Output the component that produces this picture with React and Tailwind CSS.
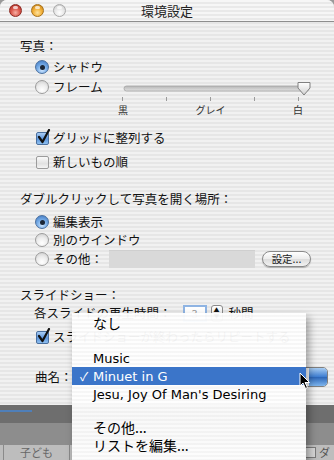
import React from 'react';

const stripes =
  'bg-[repeating-linear-gradient(180deg,#f1f1f1_0px,#f1f1f1_2px,#e6e6e6_2px,#e6e6e6_4px)]';
const jp = { fontFamily: '"Noto Sans CJK JP", "DejaVu Sans", sans-serif' };
const menuFont = { fontFamily: '"DejaVu Sans", "Noto Sans CJK JP", sans-serif' };

function Light({ color }) {
  const fills = {
    red: 'bg-[radial-gradient(circle_at_50%_70%,#f6b0a4_0%,#dc5a4e_45%,#a8281f_100%)] border-[#8c2a22]',
    yellow: 'bg-[radial-gradient(circle_at_50%_70%,#fde3a0_0%,#f3b23b_45%,#c07a12_100%)] border-[#a7711a]',
    gray: 'bg-[radial-gradient(circle_at_50%_70%,#ffffff_0%,#e6e6e6_50%,#c4c4c4_100%)] border-[#a9a9a9]',
  };
  return (
    <div className={`relative w-[13px] h-[13px] rounded-full border ${fills[color]}`}>
      <div className="absolute left-[3px] top-[1px] w-[5px] h-[3px] rounded-full bg-white/70" />
    </div>
  );
}

function Radio({ on }) {
  return on ? (
    <div className="w-[14px] h-[14px] rounded-full border border-[#4a6f9e] bg-[radial-gradient(circle_at_50%_75%,#cfe6ff_0%,#79aee8_45%,#3c74be_100%)] flex items-center justify-center shrink-0">
      <div className="w-[5px] h-[5px] rounded-full bg-[#1b2636]" />
    </div>
  ) : (
    <div className="w-[14px] h-[14px] rounded-full border border-[#9c9c9c] bg-[radial-gradient(circle_at_50%_75%,#ffffff_0%,#ececec_50%,#c9c9c9_100%)] shrink-0" />
  );
}

function Check({ on }) {
  return (
    <div className="relative w-[13px] h-[13px] shrink-0">
      <div
        className={
          on
            ? 'w-[13px] h-[13px] rounded-[2px] border border-[#4a6f9e] bg-[linear-gradient(180deg,#a9cdf5_0%,#5d96dc_55%,#8fc0f0_100%)]'
            : 'w-[13px] h-[13px] rounded-[2px] border border-[#9c9c9c] bg-[linear-gradient(180deg,#fafafa_0%,#e2e2e2_60%,#f4f4f4_100%)]'
        }
      />
      {on && (
        <svg className="absolute left-[1px] top-[-3px]" width="14" height="15" viewBox="0 0 14 15">
          <path d="M2 8 L5.5 13 L12 1" fill="none" stroke="#111" strokeWidth="2.2" strokeLinecap="round" strokeLinejoin="round" />
        </svg>
      )}
    </div>
  );
}

function Row({ children, className = '' }) {
  return <div className={`flex items-center h-[18px] ${className}`}>{children}</div>;
}

function Slider() {
  return (
    <svg width="200" height="18" viewBox="0 0 200 18">
      <defs>
        <linearGradient id="trk" x1="0" y1="0" x2="0" y2="1">
          <stop offset="0" stopColor="#b5b5b5" />
          <stop offset="1" stopColor="#e2e2e2" />
        </linearGradient>
        <linearGradient id="thm" x1="0" y1="0" x2="0" y2="1">
          <stop offset="0" stopColor="#ffffff" />
          <stop offset="1" stopColor="#d0d0d0" />
        </linearGradient>
      </defs>
      <rect x="6" y="8" width="185" height="5" rx="2.5" fill="url(#trk)" stroke="#a5a5a5" strokeWidth="0.8" />
      <path d="M180 4.5 H192 V10 L186 17 L180 10 Z" fill="url(#thm)" stroke="#808080" strokeWidth="1" strokeLinejoin="round" />
    </svg>
  );
}

function Cursor() {
  return (
    <svg width="12" height="18" viewBox="0 0 12 18">
      <path d="M1 1 V14 L4 11 L6.5 16.5 L8.5 15.5 L6 10.5 H10.5 Z" fill="#000" stroke="#fff" strokeWidth="1" strokeLinejoin="round" />
    </svg>
  );
}

function MenuItem({ children, selected, check, japanese }) {
  return (
    <div
      className={`h-[18px] flex items-center ${selected ? 'bg-[#3b75c9] text-white' : 'text-black'}`}
    >
      <span className="w-[21px] pl-[8px] text-[12px]">{check ? '✓' : ''}</span>
      <span className={japanese ? 'text-[14px]' : 'text-[13px]'} style={japanese ? jp : menuFont}>
        {children}
      </span>
    </div>
  );
}

export default function App() {
  return (
    <div className="relative w-[334px] h-[460px] overflow-hidden bg-[#9a9a9a] text-[12.5px] leading-none text-[#111]" style={jp}>
      {/* window */}
      <div className={`h-[405px] rounded-t-[7px] ${stripes} flex flex-col`}>
        <div className="relative h-[22px] border-b border-[#8e8e8e] flex items-center pl-[9px] gap-[9px] bg-[repeating-linear-gradient(180deg,#f6f6f6_0px,#f6f6f6_2px,#e9e9e9_2px,#e9e9e9_4px)] rounded-t-[7px]">
          <Light color="red" />
          <Light color="yellow" />
          <Light color="gray" />
          <div className="absolute inset-0 flex items-center justify-center text-[13px] text-[#222] pointer-events-none">環境設定</div>
        </div>

        <div className="pl-[20px] flex flex-col">
          <Row className="mt-[15px]">写真：</Row>

          <Row className="mt-[3px] pl-[15px] gap-[4px]">
            <Radio on />
            <span>シャドウ</span>
          </Row>

          <Row className="mt-[2px] pl-[15px] gap-[4px]">
            <Radio />
            <span>フレーム</span>
            <div className="ml-[11px]">
              <Slider />
            </div>
          </Row>

          <div className="ml-[93px] w-[195px] flex flex-col">
            <div className="h-[6px] flex justify-between px-[9px]">
              <div className="w-px h-[4px] mt-[1px] bg-[#9a9a9a]" />
              <div className="w-px h-[4px] mt-[1px] bg-[#9a9a9a]" />
              <div className="w-px h-[4px] mt-[1px] bg-[#9a9a9a]" />
              <div className="w-px h-[4px] mt-[1px] bg-[#9a9a9a]" />
              <div className="w-px h-[4px] mt-[1px] bg-[#9a9a9a]" />
            </div>
            <div className="h-[16px] flex justify-between items-center text-[10px] text-[#333]">
              <span className="w-[20px] text-center">黒</span>
              <span className="w-[30px] text-center">グレイ</span>
              <span className="w-[20px] text-center">白</span>
            </div>
          </div>

          <Row className="mt-[11px] pl-[16px] gap-[4px]">
            <Check on />
            <span>グリッドに整列する</span>
          </Row>
          <Row className="mt-[6px] pl-[16px] gap-[4px]">
            <Check />
            <span>新しいもの順</span>
          </Row>

          <Row className="mt-[19px]">ダブルクリックして写真を開く場所：</Row>
          <Row className="mt-[5px] pl-[15px] gap-[4px]">
            <Radio on />
            <span>編集表示</span>
          </Row>
          <Row className="pl-[15px] gap-[4px]">
            <Radio />
            <span>別のウインドウ</span>
          </Row>
          <div className="h-[20px] flex items-center pl-[15px] gap-[4px]">
            <Radio />
            <span>その他：</span>
            <div className="ml-[2px] w-[146px] h-[18px] bg-[#d9d9d9] border-t border-[#cfcfcf]" />
            <button className="ml-[3px] w-[49px] h-[16px] rounded-full border border-[#8a8a8a] bg-[linear-gradient(180deg,#ffffff_0%,#ececec_50%,#dcdcdc_51%,#f2f2f2_100%)] text-[10.5px] text-[#222] flex items-center justify-center shadow-[0_1px_1px_rgba(0,0,0,0.25)]">
              設定...
            </button>
          </div>

          <Row className="mt-[17px]">スライドショー：</Row>
          <Row className="pl-[14px]">
            <span>各スライドの再生時間：</span>
            <div className="ml-[11px] w-[24px] h-[17px] border-2 border-[#8fb4e3] bg-white flex items-center justify-center text-[11px] text-[#999]">3</div>
            <div className="ml-[4px] w-[12px] h-[17px] rounded-[3px] border border-[#8a8a8a] bg-[linear-gradient(180deg,#fff,#ddd)] flex flex-col items-center justify-center text-[6px]">
              <span>▲</span>
              <span>▼</span>
            </div>
            <span className="ml-[6px]">秒間</span>
          </Row>
          <Row className="mt-[6px] pl-[16px] gap-[4px]">
            <Check on />
            <span>スライドショーが終わったらリピートする</span>
          </Row>

          <div className="mt-[20px] h-[22px] flex items-center pl-[15px]">
            <span>曲名：</span>
            <div className="ml-[14px] w-[241px] h-[20px] rounded-[5px] border border-[#7f7f7f] bg-white flex justify-end overflow-hidden">
              <div className="w-[18px] h-full bg-[linear-gradient(180deg,#a8cdf3_0%,#3b7bd0_50%,#2c66b8_51%,#7fb6ee_100%)]" />
            </div>
          </div>
        </div>
      </div>

      {/* windows behind, lower part */}
      <div className="h-[55px] flex flex-col">
        <div className="h-[18px] bg-[#6e6e6e] flex flex-col">
          <div className="mt-[5px] w-[32px] h-[2px] bg-[#4f7fb9]" />
        </div>
        <div className="h-[22px] bg-[#8d8d8d]" />
        <div className="flex-1 bg-[#bdbdbd] flex items-center">
          <div className="ml-[3px] w-[67px] h-full border-x border-[#8a8a8a] flex items-center justify-center text-[11px] text-[#666]">子ども</div>
          <div className="ml-auto mr-[4px] flex items-center gap-[3px]">
            <div className="w-[11px] h-[11px] border border-[#7a7a7a] bg-[#d6d6d6]" />
            <span className="text-[11px] text-[#555]">ダ</span>
          </div>
        </div>
      </div>

      {/* popup menu */}
      <div
        className="absolute left-[72px] top-[313px] w-[234px] h-[160px] pt-[1px] bg-[repeating-linear-gradient(180deg,rgba(255,255,255,0.955)_0px,rgba(255,255,255,0.955)_2px,rgba(247,247,247,0.955)_2px,rgba(247,247,247,0.955)_4px)] shadow-[3px_4px_8px_rgba(0,0,0,0.35)]"
      >
        <MenuItem japanese>なし</MenuItem>
        <div className="h-[17px]" />
        <MenuItem>Music</MenuItem>
        <MenuItem selected check>Minuet in G</MenuItem>
        <MenuItem>Jesu, Joy Of Man's Desiring</MenuItem>
        <div className="h-[15px]" />
        <MenuItem japanese>その他...</MenuItem>
        <MenuItem japanese>リストを編集...</MenuItem>
      </div>

      {/* mouse pointer */}
      <div className="absolute left-[299px] top-[372px]">
        <Cursor />
      </div>
    </div>
  );
}
